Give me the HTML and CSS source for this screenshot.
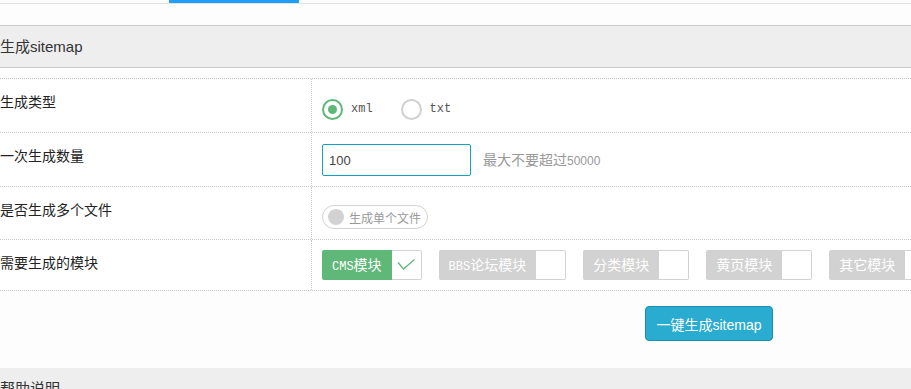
FILE: index.html
```html
<!DOCTYPE html>
<html lang="zh-CN">
<head>
<meta charset="utf-8">
<title>生成sitemap</title>
<link rel="stylesheet" href="styles.css">
</head>
<body>
<div class="tabs"><span class="tab-active"></span></div>

<div class="section-head">生成sitemap</div>

<div class="table">
  <div class="row h53">
    <div class="label">生成类型</div>
    <div class="val val-radio">
      <label class="radio"><span class="radio-dot checked"></span><span class="radio-text">xml</span></label>
      <label class="radio"><span class="radio-dot"></span><span class="radio-text">txt</span></label>
    </div>
  </div>
  <div class="row h53">
    <div class="label">一次生成数量</div>
    <div class="val val-input">
      <input class="text-input" type="text" value="100">
      <span class="hint">最大不要超过<span class="hint-num">50000</span></span>
    </div>
  </div>
  <div class="row h52">
    <div class="label">是否生成多个文件</div>
    <div class="val val-switch">
      <span class="switch"><span class="switch-knob"></span>生成单个文件</span>
    </div>
  </div>
  <div class="row h50 last">
    <div class="label">需要生成的模块</div>
    <div class="val val-check">
      <span class="chk checked"><span class="chk-label"><span class="lat">CMS</span>模块</span><span class="chk-box"><svg width="29" height="28" viewBox="0 0 29 28"><path d="M6 11.5 L11.5 18 L22.5 8.5" fill="none" stroke="#5fb878" stroke-width="1.3"/></svg></span></span>
      <span class="chk"><span class="chk-label"><span class="lat">BBS</span>论坛模块</span><span class="chk-box"></span></span>
      <span class="chk"><span class="chk-label">分类模块</span><span class="chk-box"></span></span>
      <span class="chk"><span class="chk-label">黄页模块</span><span class="chk-box"></span></span>
      <span class="chk"><span class="chk-label">其它模块</span><span class="chk-box"></span></span>
    </div>
  </div>
</div>

<div class="actions">
  <button class="btn" type="button">一键生成sitemap</button>
</div>

<div class="section-head help">帮助说明</div>
</body>
</html>
```

FILE: styles.css
```css
html, body {
  margin: 0;
  padding: 0;
}
body {
  background: #fdfdfd;
  font-family: "Liberation Sans", "Noto Sans CJK SC", sans-serif;
  color: #333;
  width: 911px;
  overflow: hidden;
}

.tabs {
  display: flex;
  height: 3px;
  border-bottom: 1px solid #e2e2e2;
}
.tab-active {
  margin-left: 169px;
  width: 130px;
  height: 3px;
  background: #1e9fff;
}

.section-head {
  margin-top: 21px;
  height: 41px;
  line-height: 41px;
  background: #eeeeee;
  border-top: 1px solid #cccccc;
  border-bottom: 1px solid #cccccc;
  font-size: 15px;
  color: #333;
  white-space: nowrap;
}
.section-head.help {
  margin-top: 0;
  border-top: 0;
  border-bottom: 0;
}

.table {
  margin-top: 10px;
  border-bottom: 1px dotted #c8c8c8;
}
.row {
  display: grid;
  grid-template-columns: 312px 1fr;
  border-top: 1px dotted #c8c8c8;
  background: #fff;
}
.h53 { height: 53px; }
.h52 { height: 52px; }
.h50 { height: 50px; }

.label {
  border-right: 1px dotted #c8c8c8;
  padding-top: 13px;
  font-size: 14px;
  line-height: 20px;
  color: #222;
  white-space: nowrap;
}
.val {
  display: flex;
  align-items: flex-start;
  padding-left: 10px;
  white-space: nowrap;
}
.val-radio { padding-top: 20px; }
.val-input { padding-top: 11px; }
.val-switch { padding-top: 18px; }
.val-check { padding-top: 10px; }

.radio {
  display: flex;
  align-items: center;
  height: 20px;
  margin-right: 28px;
}
.radio-dot {
  box-sizing: border-box;
  width: 21px;
  height: 21px;
  border: 2px solid #d0d0d0;
  border-radius: 50%;
  display: flex;
  align-items: center;
  justify-content: center;
}
.radio-dot.checked {
  border-color: #5fb878;
}
.radio-dot.checked::after {
  content: "";
  width: 9px;
  height: 9px;
  border-radius: 50%;
  background: #5fb878;
}
.radio-text {
  margin-left: 8px;
  font-family: "Liberation Mono", monospace;
  font-size: 12px;
  color: #555;
}

.text-input {
  box-sizing: border-box;
  width: 149px;
  height: 32px;
  margin: 0;
  padding: 0 6px;
  border: 1px solid #169fc6;
  border-radius: 2px;
  outline: none;
  font-family: "Liberation Sans", "Noto Sans CJK SC", sans-serif;
  font-size: 13px;
  color: #444;
  background: #fff;
}
.hint {
  margin-left: 12px;
  line-height: 32px;
  font-size: 14px;
  color: #999;
}
.hint-num {
  font-size: 12px;
}

.switch {
  box-sizing: border-box;
  display: flex;
  align-items: center;
  height: 24px;
  padding: 0 6px 0 5px;
  border: 1px solid #d2d2d2;
  border-radius: 12px;
  background: #fff;
  font-size: 12px;
  color: #999;
}
.switch-knob {
  width: 16px;
  height: 16px;
  border-radius: 50%;
  background: #d2d2d2;
  margin-right: 5px;
}

.chk {
  display: flex;
  height: 30px;
  margin-right: 17px;
}
.chk-label {
  padding: 0 10px;
  line-height: 30px;
  background: #d2d2d2;
  color: #fff;
  font-size: 14px;
  border-radius: 2px 0 0 2px;
}
.lat {
  font-family: "Liberation Mono", monospace;
  font-size: 12px;
}
.chk-box {
  box-sizing: border-box;
  width: 30px;
  height: 30px;
  border: 1px solid #d2d2d2;
  border-left: 0;
  border-radius: 0 2px 2px 0;
  background: #fff;
}
.chk-box svg {
  display: block;
}
.chk.checked .chk-label {
  background: #5fb878;
}

.actions {
  padding: 15px 0 27px 645px;
}
.btn {
  display: block;
  box-sizing: border-box;
  width: 128px;
  height: 35px;
  margin: 0;
  padding: 0;
  border: 1px solid #1a8db3;
  border-radius: 4px;
  background: #2aacd0;
  color: #fff;
  font-family: "Liberation Sans", "Noto Sans CJK SC", sans-serif;
  font-size: 14px;
  cursor: pointer;
}
```
